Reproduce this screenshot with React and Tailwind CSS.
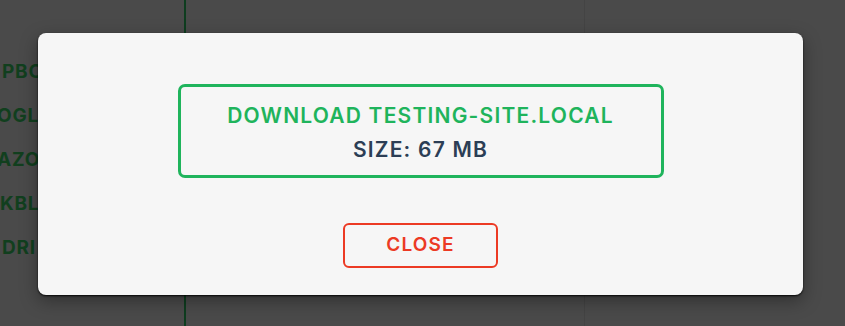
import React from "react";

const rows = [
    {label: "PBC", shift: "ml-[2px]"},
    {label: "OGLE", shift: "-ml-[3px]"},
    {label: "AZON", shift: "-ml-[3px]"},
    {label: "KBL", shift: "ml-0"},
    {label: "DRI", shift: "ml-[2px]"},
];

export default function App() {
    return (
        <div className="relative w-[845px] h-[326px] overflow-hidden bg-[#4a4a4a] font-['Inter','Liberation_Sans',sans-serif]">
            {/* dimmed page behind the modal */}
            <div className="flex h-full">
                <div className="w-[184px] overflow-hidden pt-[60px] flex flex-col gap-[20px]">
                    {rows.map((row) => (
                        <div key={row.label} className={"text-[19px] leading-[24px] font-bold tracking-[0.04em] text-[#113f1e] whitespace-nowrap " + row.shift}>
                            {row.label}
                        </div>
                    ))}
                </div>
                <div className="w-[2px] bg-[#0e3d1f]"></div>
                <div className="w-[398px]"></div>
                <div className="w-[1px] bg-[#444444]"></div>
                <div className="flex-1"></div>
            </div>

            {/* modal */}
            <div className="absolute left-[38px] top-[33px] w-[765px] h-[262px] rounded-[8px] bg-[#f6f6f6] shadow-[0_1px_2px_rgba(0,0,0,0.9),0_6px_18px_rgba(0,0,0,0.35)] flex flex-col items-center pt-[51px]">
                <div className="w-[486px] h-[94px] rounded-[7px] border-[3px] border-[#1fb45c] flex flex-col items-center justify-center gap-[9px] pt-[2px] tracking-[0.075em]">
                    <div className="text-[21px] leading-[25px] font-semibold text-[#1fb45c]">
                        DOWNLOAD TESTING-SITE.LOCAL
                    </div>
                    <div className="text-[21px] leading-[25px] font-semibold text-[#2c3e55]">
                        SIZE: 67 MB
                    </div>
                </div>
                <button className="mt-[45px] w-[155px] h-[45px] rounded-[6px] border-2 border-[#ec3a24] text-[#ec3a24] text-[19px] font-semibold tracking-[0.06em]">
                    CLOSE
                </button>
            </div>
        </div>
    );
}
